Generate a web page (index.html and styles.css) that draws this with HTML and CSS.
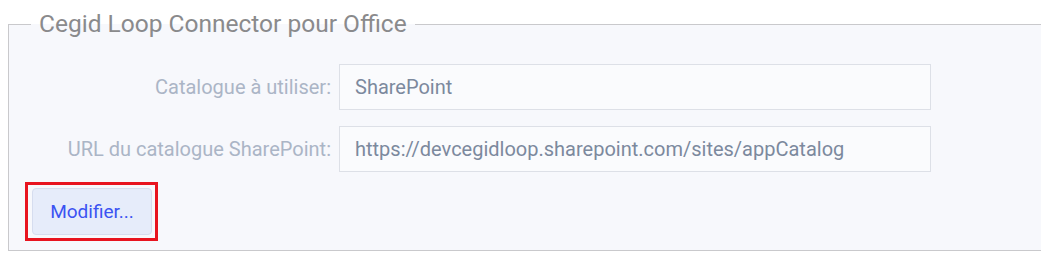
FILE: index.html
```html
<!DOCTYPE html>
<html lang="fr">
<head>
<meta charset="utf-8">
<title>Cegid Loop Connector pour Office</title>
<link rel="stylesheet" href="styles.css">
</head>
<body>
<div class="page">
  <fieldset class="group">
    <legend class="group-title">Cegid Loop Connector pour Office</legend>
    <div class="form">
      <label class="field-label" for="cat">Catalogue à utiliser:</label>
      <div class="field-value" id="cat">SharePoint</div>
      <label class="field-label" for="url">URL du catalogue SharePoint:</label>
      <div class="field-value" id="url">https://devcegidloop.sharepoint.com/sites/appCatalog</div>
    </div>
    <div class="actions">
      <div class="highlight">
        <button class="btn" type="button">Modifier...</button>
      </div>
    </div>
  </fieldset>
</div>
</body>
</html>
```

FILE: styles.css
```css
html, body {
  margin: 0;
  padding: 0;
  background: #ffffff;
  overflow: hidden;
}

body {
  font-family: Roboto, "Liberation Sans", Arial, sans-serif;
}

.page {
  padding: 10px 0 0 8px;
  width: 1060px;
}

.group {
  margin: 0;
  width: 1040px;
  box-sizing: border-box;
  border: 1px solid #c9c9cc;
  background: #f7f8fc;
  padding: 26px 0 9px 22px;
}

.group-title {
  padding: 0 8px;
  font-size: 24.5px;
  line-height: 28px;
  color: #8a8a8c;
}

.form {
  display: grid;
  grid-template-columns: 300px 592px;
  column-gap: 8px;
  row-gap: 16px;
  align-items: center;
}

.field-label {
  text-align: right;
  font-size: 20px;
  color: #abb5c6;
}

.field-value {
  box-sizing: border-box;
  height: 46px;
  border: 1px solid #dde0e7;
  background: #fafbfd;
  padding: 0 15px;
  display: flex;
  align-items: center;
  font-size: 20px;
  color: #7c899d;
}

.actions {
  display: flex;
  margin-top: 10px;
  margin-left: -6px;
}

.highlight {
  border: 3px solid #e8141f;
  padding: 3px 3px 3px 4px;
}

.btn {
  display: block;
  box-sizing: border-box;
  width: 120px;
  height: 47px;
  border: 1px solid #d6ddef;
  border-radius: 4px;
  background: #e6ecfa;
  color: #3b53f2;
  font-family: Roboto, "Liberation Sans", Arial, sans-serif;
  font-size: 19px;
  padding: 0;
  cursor: pointer;
}
```
